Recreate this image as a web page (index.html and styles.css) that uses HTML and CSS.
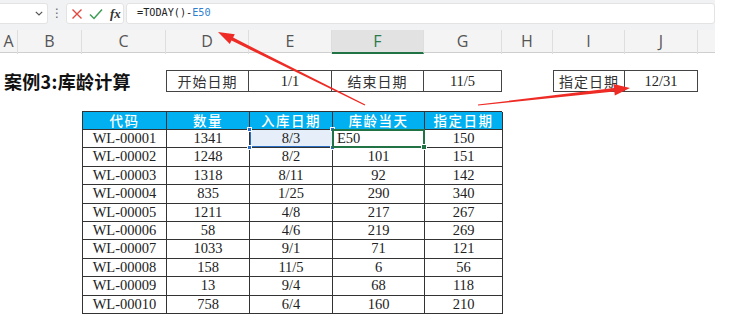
FILE: index.html
```html
<!DOCTYPE html>
<html lang="zh">
<head>
<meta charset="utf-8">
<title>库龄计算</title>
<link rel="stylesheet" href="styles.css">
</head>
<body>
<div class="app">
  <div class="fbar">
    <div class="namebox">
      <svg class="chev" width="8" height="5" viewBox="0 0 8 5"><path d="M0.8 0.8 L4 4 L7.2 0.8" fill="none" stroke="#555" stroke-width="1.2"/></svg>
    </div>
    <div class="dots">⋮</div>
    <div class="btns">
      <svg width="12" height="12" viewBox="0 0 12 12"><path d="M1.5 1.5 L10.5 10.5 M10.5 1.5 L1.5 10.5" stroke="#e0483e" stroke-width="1.4" fill="none"/></svg>
      <svg width="14" height="12" viewBox="0 0 14 12"><path d="M1 6.5 L5 10.5 L13 1.5" stroke="#3f9c55" stroke-width="1.5" fill="none"/></svg>
      <span class="fx">fx</span>
    </div>
    <div class="formula">=TODAY()-<span class="fref">E50</span></div>
  </div>
  <div class="colhdr">
    <div class="ch">A</div>
    <div class="ch">B</div>
    <div class="ch">C</div>
    <div class="ch">D</div>
    <div class="ch">E</div>
    <div class="ch sel">F</div>
    <div class="ch">G</div>
    <div class="ch">H</div>
    <div class="ch">I</div>
    <div class="ch">J</div>
    <div class="ch last"></div>
  </div>
  <div class="sheet">
    <div class="titlerow">
      <div class="title">案例3:库龄计算</div>
      <div class="box first cn">开始日期</div>
      <div class="box">1/1</div>
      <div class="box cn">结束日期</div>
      <div class="box">11/5</div>
      <div class="gap"></div>
      <div class="box first cn">指定日期</div>
      <div class="box">12/31</div>
    </div>
    <div class="table">
      <div class="th">代码</div><div class="th">数量</div><div class="th">入库日期</div><div class="th">库龄当天</div><div class="th">指定日期</div>

      <div class="td">WL-00001</div><div class="td">1341</div><div class="td refcell">8/3<span class="hd tl"></span><span class="hd tr"></span><span class="hd bl"></span><span class="hd br"></span></div><div class="td active">E50<span class="ah"></span></div><div class="td">150</div>
      <div class="td">WL-00002</div><div class="td">1248</div><div class="td">8/2</div><div class="td">101</div><div class="td">151</div>
      <div class="td">WL-00003</div><div class="td">1318</div><div class="td">8/11</div><div class="td">92</div><div class="td">142</div>
      <div class="td">WL-00004</div><div class="td">835</div><div class="td">1/25</div><div class="td">290</div><div class="td">340</div>
      <div class="td">WL-00005</div><div class="td">1211</div><div class="td">4/8</div><div class="td">217</div><div class="td">267</div>
      <div class="td">WL-00006</div><div class="td">58</div><div class="td">4/6</div><div class="td">219</div><div class="td">269</div>
      <div class="td">WL-00007</div><div class="td">1033</div><div class="td">9/1</div><div class="td">71</div><div class="td">121</div>
      <div class="td">WL-00008</div><div class="td">158</div><div class="td">11/5</div><div class="td">6</div><div class="td">56</div>
      <div class="td">WL-00009</div><div class="td">13</div><div class="td">9/4</div><div class="td">68</div><div class="td">118</div>
      <div class="td">WL-00010</div><div class="td">758</div><div class="td">6/4</div><div class="td">160</div><div class="td">210</div>
    </div>
  </div>
  <svg class="arrows" width="744" height="329" viewBox="0 0 744 329">
    <polygon fill="#ee2b25" points="218,32 234.8,34.2 233.1,37.6 365.3,104.6 364.7,105.4 231.5,40.6 229.8,44.1"/>
    <polygon fill="#ee2b25" points="630,88 613.4,83.9 613.9,88.1 477.9,104.5 478.1,105.5 614.3,91.5 614.8,95.6"/>
  </svg>
</div>
</body>
</html>
```
FILE: styles.css
```css
body {
  margin: 0;
  background: #fff;
  font-family: "Liberation Serif", "Noto Sans CJK SC", serif;
  color: #222;
}

.app {
  position: relative;
  width: 715px;
  height: 329px;
}

.fbar {
  height: 30px;
  background: #f1f2f3;
  display: flex;
  align-items: flex-start;
  padding-top: 3px;
  box-sizing: border-box;
}

.namebox {
  width: 48px;
  height: 21px;
  background: #fff;
  border: 1px solid #e3e3e3;
  border-left: none;
  border-radius: 0 3px 3px 0;
  box-sizing: border-box;
  display: flex;
  align-items: center;
  justify-content: flex-end;
  padding-right: 4px;
}

.dots {
  width: 18px;
  height: 21px;
  line-height: 21px;
  text-align: center;
  font-family: "DejaVu Sans", sans-serif;
  font-size: 12px;
  color: #666;
}

.btns {
  width: 58px;
  height: 21px;
  margin-right: 2px;
  background: #fff;
  border: 1px solid #e3e3e3;
  border-radius: 3px;
  box-sizing: border-box;
  display: flex;
  align-items: center;
  gap: 6px;
  padding-left: 4px;
}

.fx {
  font-family: "Liberation Serif", serif;
  font-style: italic;
  font-weight: bold;
  font-size: 13px;
  color: #333;
  margin-left: 1px;
}

.formula {
  flex: 1;
  height: 21px;
  background: #fff;
  border: 1px solid #e3e3e3;
  border-radius: 3px;
  box-sizing: border-box;
  padding-left: 10px;
  font-family: "DejaVu Sans Mono", monospace;
  font-size: 10.2px;
  line-height: 18px;
  color: #222;
}

.fref {
  color: #2f7fd1;
}

.colhdr {
  display: grid;
  grid-template-columns: 18px 64px 84px 83px 83px 92px 78px 51px 72px 73px 17px;
  height: 23px;
  background: #f4f4f4;
  border-bottom: 1px solid #cfcfcf;
  box-sizing: border-box;
}

.ch {
  border-right: 1px solid #dedede;
  text-align: center;
  font-family: "Open Sans", sans-serif;
  font-size: 16px;
  line-height: 22px;
  color: #555;
}

.ch.last {
  border-right: none;
}

.ch.sel {
  background: #e2e2e2;
  color: #2b7a4b;
  border-bottom: 2px solid #217346;
}

.sheet {
  padding-top: 17px;
}

.titlerow {
  display: grid;
  grid-template-columns: 166px 83px 83px 92px 78px 51px 72px 73px;
  height: 22px;
}

.title {
  font-family: "Noto Sans CJK SC", sans-serif;
  font-weight: bold;
  font-size: 18px;
  line-height: 22px;
  padding-left: 4px;
  color: #111;
  letter-spacing: 0.3px;
}

.box {
  border-top: 1px solid #444;
  border-bottom: 1px solid #444;
  border-right: 1px solid #444;
  box-sizing: border-box;
  text-align: center;
  font-size: 14.5px;
  line-height: 20px;
}

.box.first {
  border-left: 1px solid #444;
}

.cn {
  font-family: "Noto Sans CJK SC", sans-serif;
  font-size: 14px;
  letter-spacing: 1px;
  color: #333;
}

.table {
  margin-top: 19px;
  margin-left: 82px;
  width: 420px;
  display: grid;
  grid-template-columns: 84px 83px 83px 92px 78px;
  grid-template-rows: 18px;
  grid-auto-rows: 18.4px;
  border-left: 1px solid #333;
  border-top: 1px solid #333;
  box-sizing: border-box;
}

.th, .td {
  border-right: 1px solid #333;
  border-bottom: 1px solid #333;
  box-sizing: border-box;
  text-align: center;
}

.th {
  background: #00b0f0;
  color: #fff;
  font-family: "Noto Sans CJK SC", sans-serif;
  font-weight: 500;
  font-size: 13.5px;
  line-height: 17px;
  letter-spacing: 1.5px;
}

.td {
  font-size: 14.5px;
  line-height: 17.4px;
  color: #222;
}

.refcell {
  position: relative;
  background: #e6eef9;
  box-shadow: inset 1px 0 0 #2b6fc5, inset 0 -1px 0 #2b6fc5;
}

.hd {
  position: absolute;
  width: 5px;
  height: 5px;
  background: #2b6fc5;
  border: 1px solid #fff;
  box-sizing: border-box;
}

.hd.tl { left: -3px; top: -3px; }
.hd.tr { right: -3px; top: -3px; }
.hd.bl { left: -3px; bottom: -3px; }
.hd.br { right: -3px; bottom: -3px; }

.active {
  position: relative;
  text-align: left;
  padding-left: 4px;
}

.active::after {
  content: "";
  position: absolute;
  left: -1px;
  top: -1px;
  right: -1px;
  bottom: -1px;
  border: 2px solid #217346;
}

.ah {
  position: absolute;
  right: -3px;
  bottom: -3px;
  width: 6px;
  height: 6px;
  background: #217346;
  border: 1px solid #fff;
  box-sizing: border-box;
  z-index: 2;
}

.arrows {
  position: absolute;
  left: 0;
  top: 0;
  pointer-events: none;
}
```
